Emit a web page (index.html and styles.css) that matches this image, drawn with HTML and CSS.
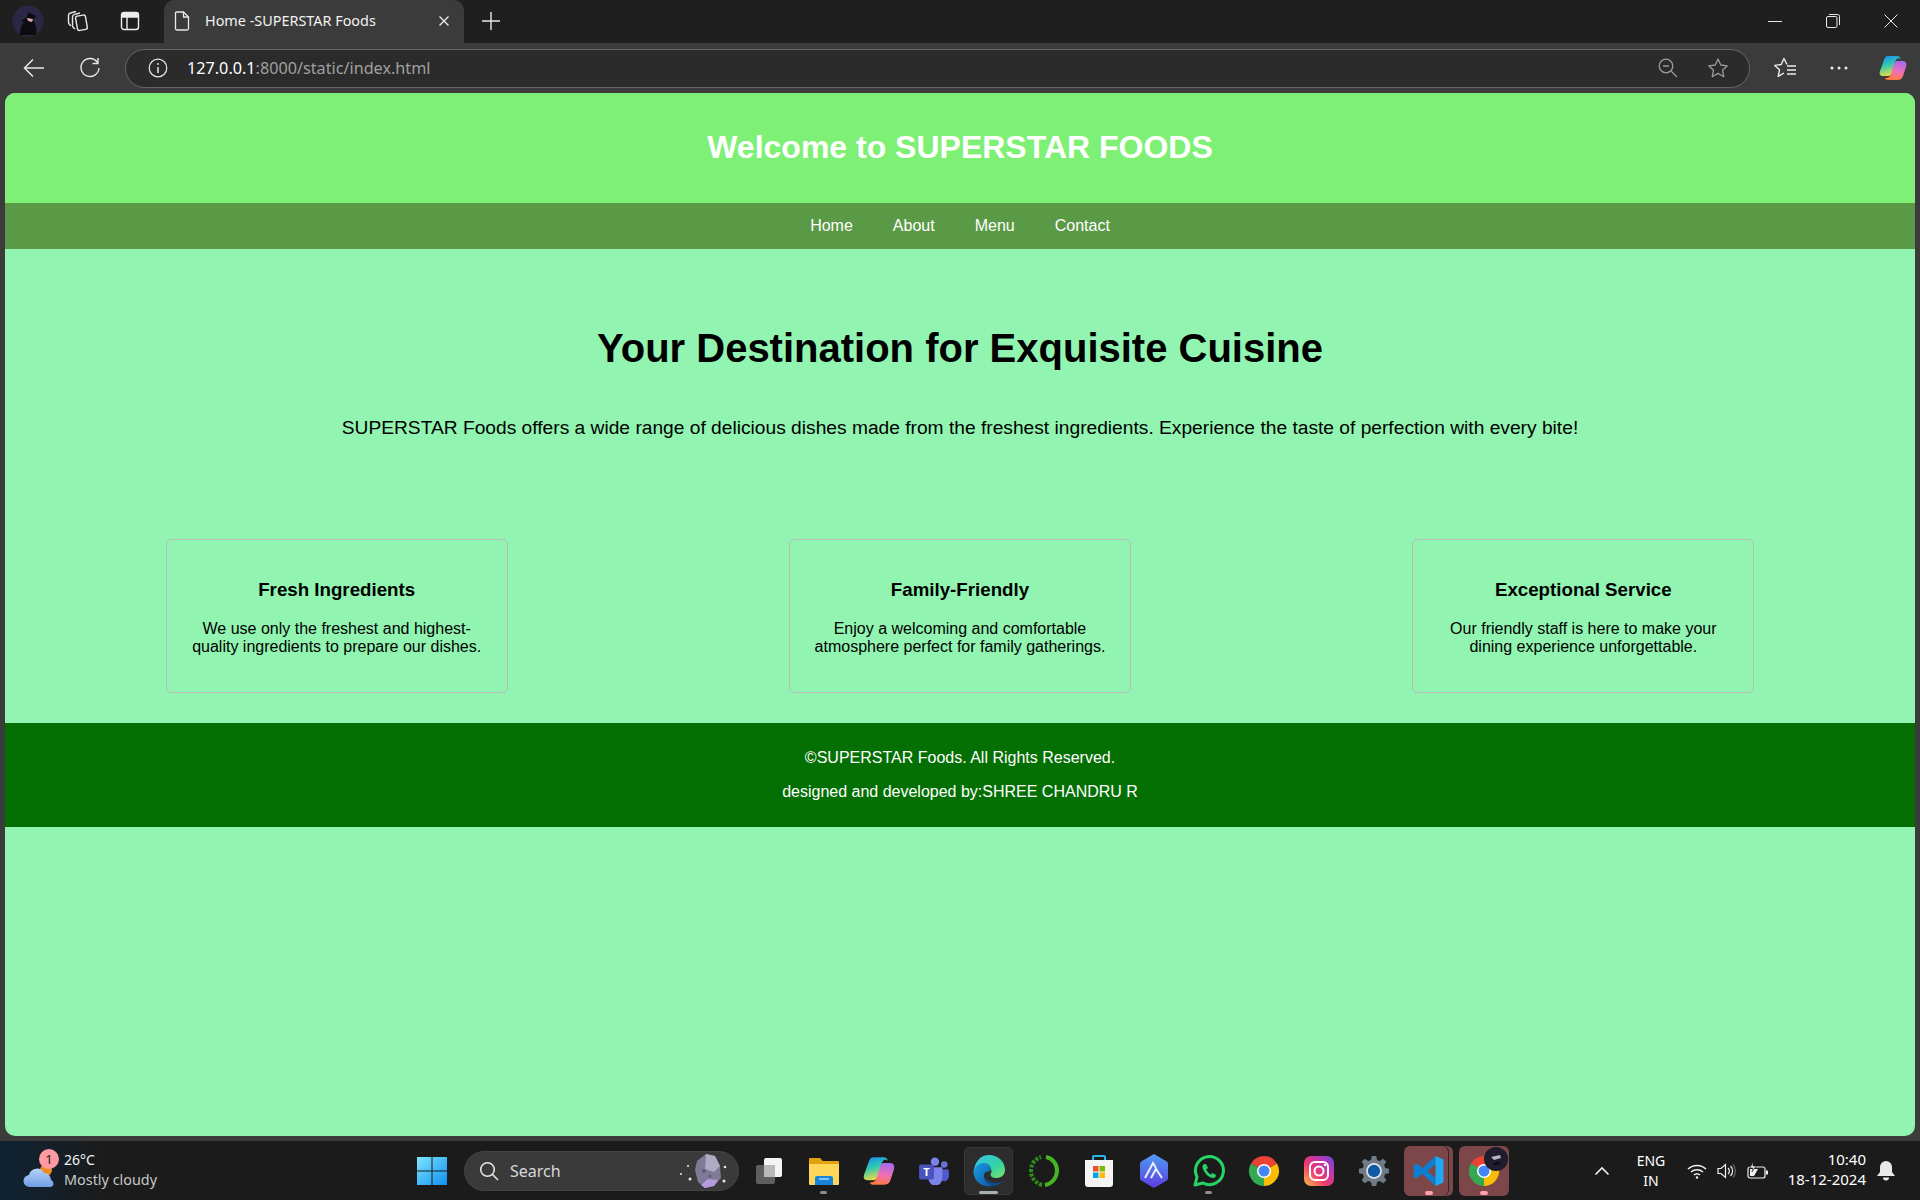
FILE: index.html
```html
<!DOCTYPE html>
<html lang="en">
<head>
    <meta charset="UTF-8">
    <meta name="viewport" content="width=device-width, initial-scale=1.0">
    <title>Home -SUPERSTAR Foods</title>
    <link rel="stylesheet" href="styles.css">
</head>
<body>
    <!-- browser title bar -->
    <div class="titlebar">
        <div class="tb-btn profile">
            <svg width="32" height="32" viewBox="0 0 32 32"><circle cx="16" cy="16" r="15.500" fill="#2c2745"/><path d="M8 30c0-7 2-10 4-13l-3-1 6-4 1-5 8 4-3 4c3 4 4 9 3 15z" fill="#0c0b12"/><path d="M15 13l6 1-1 3-4-1z" fill="#dba7b3"/></svg>
        </div>
        <div class="tb-btn collections">
            <svg width="24" height="24" viewBox="0 0 24 24" fill="none" stroke="#e8e8e8" stroke-width="1.400"><rect x="10.500" y="6.500" width="10" height="14.500" rx="2" transform="rotate(-10 15.500 14)"/><path d="M9 20l-1.500-1.300c-.7-.6-1-1.300-1-2.200V8c0-1.500.8-2.300 2-2.600L14 4"/><path d="M5 17l-1.500-1.500C2.800 14.800 2.500 14 2.500 13V6.500c0-1.400.7-2.200 2-2.500L10 2.500"/></svg>
        </div>
        <div class="tb-btn tabactions">
            <svg width="20" height="20" viewBox="0 0 20 20" fill="none" stroke="#eee" stroke-width="1.400"><rect x="1.500" y="1.500" width="17" height="17" rx="2.500"/><path d="M2 2.500h16V6H2z" fill="#eee"/><path d="M7 6v12"/></svg>
        </div>
        <div class="tab">
            <svg class="tab-icon" width="16" height="20" viewBox="0 0 16 20" fill="none" stroke="#e8e8e8" stroke-width="1.300"><path d="M2.500 1h7L14.500 6v11.500a1.500 1.500 0 0 1-1.500 1.500H3a1.500 1.500 0 0 1-1.500-1.500V2A1 1 0 0 1 2.500 1z"/><path d="M9.500 1v5h5"/></svg>
            <span class="tab-title">Home -SUPERSTAR Foods</span>
            <svg class="tab-close" width="12" height="12" viewBox="0 0 12 12" stroke="#e8e8e8" stroke-width="1.400"><path d="M1.500 1.500l9 9M10.500 1.500l-9 9"/></svg>
        </div>
        <div class="newtab">
            <svg width="18" height="18" viewBox="0 0 18 18" stroke="#e8e8e8" stroke-width="1.400"><path d="M9 0v18M0 9h18"/></svg>
        </div>
        <div class="win-controls">
            <div class="win-btn"><svg width="14" height="14" viewBox="0 0 14 14" stroke="#e8e8e8"><path d="M0 7.500h14"/></svg></div>
            <div class="win-btn"><svg width="14" height="14" viewBox="0 0 14 14" fill="none" stroke="#e8e8e8"><rect x=".5" y="2.500" width="10.500" height="11" rx="1.500"/><path d="M3 .5h8.500a2 2 0 0 1 2 2V11"/></svg></div>
            <div class="win-btn"><svg width="14" height="14" viewBox="0 0 14 14" stroke="#e8e8e8"><path d="M.5.5l13 13M13.500.5l-13 13"/></svg></div>
        </div>
    </div>

    <!-- address bar row -->
    <div class="toolbar">
        <div class="nav-btn">
            <svg width="22" height="20" viewBox="0 0 22 20" fill="none" stroke="#e8e8e8" stroke-width="1.500"><path d="M21 10H2M10 1.500L1.500 10l8.500 8.500"/></svg>
        </div>
        <div class="nav-btn">
            <svg width="22" height="22" viewBox="0 0 22 22" fill="none" stroke="#e8e8e8" stroke-width="1.400"><path d="M18.500 5.500A9 9 0 1 0 20 11"/><path d="M19 1v5.500h-5.500"/></svg>
        </div>
        <div class="address">
            <svg class="addr-info" width="20" height="20" viewBox="0 0 20 20" fill="none" stroke="#e8e8e8" stroke-width="1.200"><circle cx="10" cy="10" r="8.800"/><path d="M10 9v6" stroke-width="1.500"/><circle cx="10" cy="6" r=".9" fill="#e8e8e8" stroke="none"/></svg>
            <span class="url"><span class="url-host">127.0.0.1</span>:8000/static/index.html</span>
            <div class="addr-btn addr-first">
                <svg width="20" height="20" viewBox="0 0 20 20" fill="none" stroke="#9a9a9a" stroke-width="1.300"><circle cx="8" cy="8" r="6.800"/><path d="M5 8h6M13 13l6 6"/></svg>
            </div>
            <div class="addr-btn">
                <svg width="22" height="22" viewBox="0 0 22 22" fill="none" stroke="#9a9a9a" stroke-width="1.300" stroke-linejoin="round"><path d="M11 2l2.800 6 6.500.8-4.800 4.400 1.300 6.500-5.800-3.300-5.800 3.300 1.300-6.500L1.700 8.800 8.200 8z"/></svg>
            </div>
        </div>
        <div class="tool-btn">
            <svg width="24" height="22" viewBox="0 0 24 22" fill="none" stroke="#ececec" stroke-width="1.400" stroke-linejoin="round"><path d="M14 7.500L11 1.500 8.200 7.500l-6.500.9 4.800 4.400-1.300 6.500 5.800-3.300"/><path d="M14 9h9M14 13h9M14 17h9"/></svg>
        </div>
        <div class="tool-btn">
            <svg width="18" height="4" viewBox="0 0 18 4" fill="#ececec"><circle cx="2" cy="2" r="1.500"/><circle cx="9" cy="2" r="1.500"/><circle cx="16" cy="2" r="1.500"/></svg>
        </div>
        <div class="tool-btn">
            <svg width="28" height="28" viewBox="0 0 28 28">
                <defs>
                    <linearGradient id="cpA" x1=".2" y1="0" x2=".5" y2="1"><stop offset="0" stop-color="#1b8fee"/><stop offset=".45" stop-color="#2fc9b0"/><stop offset="1" stop-color="#f7dc3a"/></linearGradient>
                    <linearGradient id="cpB" x1=".6" y1="0" x2=".4" y2="1"><stop offset="0" stop-color="#a868ee"/><stop offset=".55" stop-color="#f070b4"/><stop offset="1" stop-color="#ff7a3a"/></linearGradient>
                </defs>
                <path d="M9 2h9c2 0 3 1 4 3-3-2-5 0-6 3l-3 11c-.6 2-2 3-4 3H4c-3 0-4-2-3-5L5 6c.8-2.500 2-4 4-4z" fill="url(#cpA)"/>
                <path d="M17 7h7c3 0 4 3 3 6l-3 9c-1 3-3 4-6 4H9c-2 0-3-1-3-2 3 .5 5-1 6-4l3-10c.3-1.300 1-2.300 2-3z" fill="url(#cpB)"/>
            </svg>
        </div>
    </div>

    <!-- the page itself -->
    <div class="viewport">
        <div class="page">
            <header class="site-header">
                <h1>Welcome to SUPERSTAR FOODS</h1>
            </header>
            <nav class="site-nav">
                <a href="#">Home</a>
                <a href="#">About</a>
                <a href="#">Menu</a>
                <a href="#">Contact</a>
            </nav>
            <section class="hero">
                <h2>Your Destination for Exquisite Cuisine</h2>
                <p>SUPERSTAR Foods offers a wide range of delicious dishes made from the freshest ingredients. Experience the taste of perfection with every bite!</p>
            </section>
            <section class="features">
                <div class="feature">
                    <h3>Fresh Ingredients</h3>
                    <p>We use only the freshest and highest-quality ingredients to prepare our dishes.</p>
                </div>
                <div class="feature">
                    <h3>Family-Friendly</h3>
                    <p>Enjoy a welcoming and comfortable atmosphere perfect for family gatherings.</p>
                </div>
                <div class="feature">
                    <h3>Exceptional Service</h3>
                    <p>Our friendly staff is here to make your dining experience unforgettable.</p>
                </div>
            </section>
            <footer class="site-footer">
                <p>©SUPERSTAR Foods. All Rights Reserved.</p>
                <p>designed and developed by:SHREE CHANDRU R</p>
            </footer>
        </div>
    </div>

    <!-- windows taskbar -->
    <div class="taskbar">
        <div class="weather">
            <svg class="weather-icon" width="34" height="26" viewBox="0 0 34 26"><defs><linearGradient id="cloud" x1="0" y1="0" x2="0" y2="1"><stop offset="0" stop-color="#b4d2f7"/><stop offset="1" stop-color="#6f9fe6"/></linearGradient></defs><circle cx="23" cy="8" r="6" fill="#f08a24"/><path d="M7 25a6 6 0 0 1-1-12 8 8 0 0 1 15-2 7 7 0 0 1 7 7c3 1 4 7-1 7z" fill="url(#cloud)"/></svg>
            <span class="weather-badge">1</span>
            <div class="weather-text">
                <span class="temp">26°C</span>
                <span class="cond">Mostly cloudy</span>
            </div>
        </div>
        <div class="start">
            <svg width="30" height="30" viewBox="0 0 30 30"><defs><linearGradient id="winG" x1="0" y1="0" x2="1" y2="1"><stop offset="0" stop-color="#7fe6ff"/><stop offset="1" stop-color="#0f8fef"/></linearGradient></defs><path d="M0 1h14.500v13.500H0zM15.500 1H30v13.500H15.500zM0 15.500h14.500V29H0zM15.500 15.500H30V29H15.500z" fill="url(#winG)"/></svg>
        </div>
        <div class="search">
            <svg width="20" height="20" viewBox="0 0 20 20" fill="none" stroke="#e4e4e4" stroke-width="1.600"><circle cx="8.500" cy="8.500" r="6.800"/><path d="M13.500 13.500l5.500 5.500"/></svg>
            <span class="search-label">Search</span>
            <svg class="search-art" width="50" height="36" viewBox="0 0 50 36"><path d="M19 8l9-7 9 2 5 10 1 12-7 8-9 2-7-6-3-12z" fill="#7f7b96"/><path d="M28 1l9 2 5 10-6 6-9-3z" fill="#aeacc2"/><path d="M23 32l7-6 10 1-4 6-9 2z" fill="#b39bdc"/><circle cx="26" cy="18" r="2" fill="#5f5b76"/><circle cx="32" cy="23" r="1.500" fill="#5f5b76"/><g fill="#e8e8f0"><circle cx="3" cy="21" r="1"/><circle cx="10" cy="13" r="1"/><circle cx="12" cy="26" r="1.500"/><circle cx="47" cy="14" r="1.300"/><circle cx="46" cy="28" r="1.500"/></g></svg>
        </div>

        <div class="apps">
            <div class="app">
                <svg width="30" height="30" viewBox="0 0 30 30"><rect x="2" y="9" width="19" height="19" rx="2" fill="#5e5e5e"/><rect x="10" y="2" width="18" height="19" rx="2" fill="#f4f4f4"/><rect x="10" y="9" width="11" height="12" fill="#b9b9b9"/></svg>
            </div>
            <div class="app app-running">
                <svg width="32" height="30" viewBox="0 0 32 30"><path d="M1 3a1 1 0 0 1 1-1h10l3 3h15a1 1 0 0 1 1 1v3H1z" fill="#e2a20c"/><path d="M1 8h30v20a1 1 0 0 1-1 1H2a1 1 0 0 1-1-1z" fill="#fdd65a"/><path d="M9 20h14a2 2 0 0 1 2 2v7H7v-7a2 2 0 0 1 2-2z" fill="#1a84d8"/><path d="M11 23h10" stroke="#a9dbff" stroke-width="1.500"/></svg>
            </div>
            <div class="app">
                <svg width="32" height="32" viewBox="0 0 28 28"><defs><linearGradient id="cpA2" x1=".2" y1="0" x2=".5" y2="1"><stop offset="0" stop-color="#1b8fee"/><stop offset=".45" stop-color="#2fc9b0"/><stop offset="1" stop-color="#f7dc3a"/></linearGradient><linearGradient id="cpB2" x1=".6" y1="0" x2=".4" y2="1"><stop offset="0" stop-color="#a868ee"/><stop offset=".55" stop-color="#f070b4"/><stop offset="1" stop-color="#ff7a3a"/></linearGradient></defs><path d="M9 2h9c2 0 3 1 4 3-3-2-5 0-6 3l-3 11c-.6 2-2 3-4 3H4c-3 0-4-2-3-5L5 6c.8-2.500 2-4 4-4z" fill="url(#cpA2)"/><path d="M17 7h7c3 0 4 3 3 6l-3 9c-1 3-3 4-6 4H9c-2 0-3-1-3-2 3 .5 5-1 6-4l3-10c.3-1.300 1-2.300 2-3z" fill="url(#cpB2)"/></svg>
            </div>
            <div class="app">
                <svg width="30" height="28" viewBox="0 0 32 30"><circle cx="27" cy="8" r="3.500" fill="#6a71d8"/><path d="M23 13h7a2 2 0 0 1 2 2v6a5 5 0 0 1-8 4z" fill="#5059c9"/><circle cx="17" cy="5" r="4.500" fill="#7b83eb"/><path d="M10 11h15v12a7.500 7.500 0 0 1-15 0z" fill="#7b83eb"/><rect x="0" y="8" width="16" height="16" rx="2" fill="#4b53bc"/><text x="8" y="20.500" class="teams-t">T</text></svg>
            </div>
            <div class="app app-active">
                <svg width="34" height="34" viewBox="0 0 34 34"><defs><linearGradient id="edgeA" x1="0" y1="0" x2="1" y2="1"><stop offset="0" stop-color="#35c1f1"/><stop offset=".6" stop-color="#34d3a0"/><stop offset="1" stop-color="#7fe36a"/></linearGradient><linearGradient id="edgeB" x1="0" y1="0" x2="1" y2="1"><stop offset="0" stop-color="#1b9de2"/><stop offset="1" stop-color="#0c59a4"/></linearGradient></defs><path d="M17 1c9 0 16 6.500 16 15 0 5-4 8-8.500 8-3 0-6-1-6-3.500 0-1 1-1.500 1-3.500 0-3-3-6-7-6-5 0-9 4-11 8C2.500 8 8 1 17 1z" fill="url(#edgeA)"/><path d="M1.500 19c.5-6 5-10 10.500-10 4 0 7 3 7 6 0 1-1 2.500-3 2.500-3 0-5 3-3.500 7 1 3 3.500 6 7 7.500-1 .5-2 .5-3 .5C8 32 2 26 1.500 19z" fill="url(#edgeB)"/><path d="M19 32c-2-1-5-4-5.500-7.500 3 3 7 4.500 11 4.500 3 0 6-1.500 7.500-3.500-2 4-7 6.500-13 6.500z" fill="#0f4d8c"/></svg>
            </div>
            <div class="app">
                <svg width="30" height="34" viewBox="0 0 30 34" fill="none"><path d="M17 3c6 1 11 6.500 11 13.500S23 30 16 31" stroke="#46b51f" stroke-width="4"/><path d="M13 31C6 29 2 23.500 2 16.500S6 5 12 3" stroke="#2f8f1a" stroke-width="4" stroke-dasharray="3 1.500"/></svg>
            </div>
            <div class="app">
                <svg width="30" height="34" viewBox="0 0 30 34"><path d="M9 7V3a1 1 0 0 1 1-1h10a1 1 0 0 1 1 1v4" fill="none" stroke="#28b5ee" stroke-width="2"/><path d="M1 6h28v24a3 3 0 0 1-3 3H4a3 3 0 0 1-3-3z" fill="#f4f4f4"/><rect x="9" y="12" width="5.500" height="5.500" fill="#f25022"/><rect x="15.500" y="12" width="5.500" height="5.500" fill="#7fba00"/><rect x="9" y="18.500" width="5.500" height="5.500" fill="#00a4ef"/><rect x="15.500" y="18.500" width="5.500" height="5.500" fill="#ffb900"/></svg>
            </div>
            <div class="app">
                <svg width="28" height="34" viewBox="0 0 28 34"><defs><linearGradient id="hexG" x1="0" y1="0" x2="0" y2="1"><stop offset="0" stop-color="#4f9bf2"/><stop offset="1" stop-color="#5b3ee0"/></linearGradient></defs><path d="M14 0l12 7c1 .5 2 1.500 2 3v14c0 1.500-1 2.500-2 3l-12 7-12-7c-1-.5-2-1.500-2-3V10c0-1.500 1-2.500 2-3z" fill="url(#hexG)"/><path d="M5 24L13 9l3 5M11 24l5-9 6 9" fill="none" stroke="#e8f0ff" stroke-width="2"/></svg>
            </div>
            <div class="app app-running">
                <svg width="32" height="32" viewBox="0 0 32 32" fill="none"><path d="M2 30l2-8A14 14 0 1 1 10 28z" stroke="#25d366" stroke-width="3" stroke-linejoin="round"/><path d="M11 9c-2 1-2 4 0 7 2 4 6 7 9 7 2 0 3-1 3-3l-3.500-2-1.500 1.500c-2-.8-4-3-4.800-5L15 13l-2-4z" fill="#25d366"/></svg>
            </div>
            <div class="app">
                <svg width="32" height="32" viewBox="0 0 32 32"><path d="M16 16L3 8.500A15 15 0 0 1 29 8.500z" fill="#ea4335"/><path d="M16 16L29 8.500A15 15 0 0 1 16 31z" fill="#fbbc05"/><path d="M16 16L16 31A15 15 0 0 1 3 8.500z" fill="#34a853"/><circle cx="16" cy="16" r="7" fill="#fff"/><circle cx="16" cy="16" r="5.500" fill="#4285f4"/></svg>
            </div>
            <div class="app">
                <svg width="30" height="30" viewBox="0 0 30 30" fill="none"><defs><linearGradient id="igG" x1="0" y1="1" x2="1" y2="0"><stop offset="0" stop-color="#fdc04a"/><stop offset=".4" stop-color="#ee3a6a"/><stop offset=".75" stop-color="#b636b8"/><stop offset="1" stop-color="#5b51d8"/></linearGradient></defs><rect width="30" height="30" rx="7" fill="url(#igG)"/><rect x="6" y="6" width="18" height="18" rx="5" stroke="#fff" stroke-width="2"/><circle cx="15" cy="15" r="4.500" stroke="#fff" stroke-width="2"/><circle cx="21" cy="9" r="1.300" fill="#fff"/></svg>
            </div>
            <div class="app">
                <svg width="30" height="30" viewBox="-2 0 34 34"><path d="M12.500 0h5l1 4.500 3 1.300L25.500 3 29 6.500l-2.500 4 1.200 3L32 14.500v5l-4.300 1-1.200 3 2.500 4-3.500 3.500-4-2.700-3 1.200-1 4.500h-5l-1-4.500-3-1.200-4 2.700L1 27.500l2.500-4-1.200-3L-2 19.500v-5l4.300-1 1.200-3L1 6.500 4.500 3l4 2.800 3-1.300z" fill="#6e7a85"/><circle cx="15" cy="17" r="9" fill="#dfe3e6"/><circle cx="15" cy="17" r="7" fill="#0f5aa6"/></svg>
            </div>
            <div class="app app-flash app-stacked">
                <svg width="31" height="32" viewBox="0 0 30 32"><path d="M22 1L9 13 3 8.500 0 10.300v11.400l3 1.800 6-4.500L22 31zM22 9l-8 7 8 7z" fill="#0e7fd0" fill-rule="evenodd"/><path d="M22 1l8 3.500v23L22 31z" fill="#20a8f5"/></svg>
            </div>
            <div class="app app-flash">
                <svg width="32" height="32" viewBox="0 0 32 32"><path d="M16 16L3 8.500A15 15 0 0 1 29 8.500z" fill="#ea4335"/><path d="M16 16L29 8.500A15 15 0 0 1 16 31z" fill="#fbbc05"/><path d="M16 16L16 31A15 15 0 0 1 3 8.500z" fill="#34a853"/><circle cx="16" cy="16" r="7" fill="#fff"/><circle cx="16" cy="16" r="5.500" fill="#4285f4"/></svg>
                <svg class="app-avatar" width="24" height="24" viewBox="0 0 24 24"><circle cx="12" cy="12" r="12" fill="#1f1c2e"/><path d="M7 10l9-2 1 3-7 2z" fill="#b9b4c2"/><path d="M9 16l6-1 1 2-6 1z" fill="#0c0b12"/></svg>
            </div>
        </div>

        <div class="tray">
            <div class="tray-chevron">
                <svg width="16" height="10" viewBox="0 0 16 10" fill="none" stroke="#f0f0f0" stroke-width="1.600"><path d="M1.500 8.500L8 2l6.500 6.500"/></svg>
            </div>
            <div class="tray-lang"><span>ENG</span><span>IN</span></div>
            <div class="tray-wifi">
                <svg width="20" height="16" viewBox="0 0 20 16" fill="none" stroke="#f0f0f0" stroke-width="1.500"><path d="M1 6a13 13 0 0 1 18 0M4 9a9 9 0 0 1 12 0M7 12a4.500 4.500 0 0 1 6 0"/><circle cx="10" cy="14.500" r="1.200" fill="#f0f0f0" stroke="none"/></svg>
            </div>
            <div class="tray-vol">
                <svg width="20" height="16" viewBox="0 0 20 16" fill="none" stroke="#f0f0f0" stroke-width="1.200"><path d="M1 5.500h3L8.500 1.500v13L4 10.500H1z"/><path d="M11 5a4 4 0 0 1 0 6M13.500 3a7 7 0 0 1 0 10"/><path d="M16 1.500a10 10 0 0 1 0 13" stroke="#666"/></svg>
            </div>
            <div class="tray-bat">
                <svg width="22" height="18" viewBox="0 0 22 18" fill="none" stroke="#f0f0f0" stroke-width="1.200"><rect x="1" y="5" width="17" height="11" rx="2"/><path d="M20 8.500v4" stroke-width="2"/><path d="M3 14V7h5l3 0-4 7z" fill="#f0f0f0" stroke="none"/><path d="M6 0L3 6h3l-1 4 4-6H6z" fill="#f0f0f0" stroke="#1b1b1b" stroke-width=".6"/></svg>
            </div>
            <div class="tray-clock"><span>10:40</span><span>18-12-2024</span></div>
            <div class="tray-bell">
                <svg width="18" height="20" viewBox="0 0 18 20" fill="#e8e8e8"><path d="M9 0a6 6 0 0 1 6 6v5l3 4H0l3-4V6a6 6 0 0 1 6-6z"/><path d="M6 16.500h6a3 3 0 0 1-6 0z"/></svg>
            </div>
        </div>
    </div>
</body>
</html>
```

FILE: styles.css
```css
html, body {
    margin: 0;
    padding: 0;
}
body {
    width: 1920px;
    height: 1200px;
    overflow: hidden;
    display: flex;
    flex-direction: column;
    background-color: #3b3b3b;
    font-family: "Noto Sans", "Open Sans", sans-serif;
    color: #fff;
}

/* title bar */
.titlebar {
    height: 43px;
    flex: none;
    box-sizing: border-box;
    padding-bottom: 2px;
    display: flex;
    align-items: center;
    background-color: #1f1f1f;
}
.tb-btn {
    display: flex;
    justify-content: center;
    align-items: center;
}
.profile {
    width: 56px;
}
.collections {
    width: 44px;
}
.tabactions {
    width: 60px;
}
.tab {
    width: 300px;
    height: 43px;
    margin: 0 0 -2px 4px;
    padding-bottom: 2px;
    box-sizing: border-box;
    display: flex;
    align-items: center;
    background-color: #3b3b3b;
    border-radius: 10px 10px 0 0;
}
.tab-icon {
    margin-left: 10px;
}
.tab-title {
    margin-left: 15px;
    font-size: 14.4px;
    color: #f2f2f2;
    white-space: nowrap;
}
.tab-close {
    margin-left: auto;
    margin-right: 14px;
}
.newtab {
    width: 44px;
    margin-left: 5px;
    display: flex;
    justify-content: center;
}
.win-controls {
    margin-left: auto;
    display: flex;
}
.win-btn {
    width: 58px;
    display: flex;
    justify-content: center;
}

/* toolbar */
.toolbar {
    height: 50px;
    flex: none;
    display: flex;
    align-items: center;
    padding-left: 6px;
    background-color: #3b3b3b;
    box-sizing: border-box;
}
.nav-btn {
    width: 56px;
    display: flex;
    justify-content: center;
}
.address {
    flex: 1;
    height: 39px;
    margin: 0 8px 0 7px;
    padding: 0 6px 0 22px;
    box-sizing: border-box;
    display: flex;
    align-items: center;
    background-color: #2b2b2b;
    border: 1px solid #666;
    border-radius: 20px;
}
.addr-info {
    flex: none;
}
.url {
    margin-left: 19px;
    font-size: 16.2px;
    color: #a0a0a0;
    white-space: nowrap;
}
.url-host {
    color: #fff;
}
.addr-btn {
    width: 50px;
    display: flex;
    justify-content: center;
}
.addr-first {
    margin-left: auto;
}
.tool-btn {
    width: 54px;
    display: flex;
    justify-content: center;
}

/* page */
.viewport {
    flex: 1;
    min-height: 0;
    padding: 0 5px 5px;
}
.page {
    height: 100%;
    overflow: hidden;
    background-color: #91f4b1;
    border-radius: 10px;
    color: #000;
    font-family: "Liberation Sans", Arial, sans-serif;
}
.site-header {
    height: 110px;
    display: flex;
    justify-content: center;
    align-items: center;
    background-color: #7ff076;
    color: #fff;
}
.site-header h1 {
    margin: 0 0 2px;
    font-size: 32px;
}
.site-nav {
    height: 46px;
    display: flex;
    justify-content: center;
    align-items: center;
    gap: 40px;
    background-color: #5a9a46;
}
.site-nav a {
    color: #fff;
    font-size: 16px;
    text-decoration: none;
}
.hero {
    padding: 77px 20px 0;
    text-align: center;
}
.hero h2 {
    margin: 0 0 46px;
    font-size: 40px;
}
.hero p {
    margin: 0;
    font-size: 19.2px;
}
.features {
    margin-top: 100px;
    padding: 0 20px;
    display: flex;
    justify-content: space-around;
}
.feature {
    width: 300px;
    padding: 20px;
    border: 1px solid #bbb;
    border-radius: 5px;
    text-align: center;
}
.feature h3 {
    margin: 18.72px 0 19.72px;
    font-size: 18.72px;
}
.feature p {
    margin: 0 0 16px;
    font-size: 16px;
}
.site-footer {
    margin-top: 30px;
    padding: 10px;
    background-color: #047004;
    color: #fff;
    text-align: center;
    font-size: 16px;
}
.site-footer p {
    margin: 16px 0;
}

/* taskbar */
.taskbar {
    height: 59px;
    flex: none;
    position: relative;
    display: flex;
    align-items: center;
    background: linear-gradient(90deg, #0f2333 0, #1b1b1b 110px);
    font-size: 14px;
}
.weather {
    width: 412px;
    flex: none;
    display: flex;
    align-items: center;
    position: relative;
    box-sizing: border-box;
    padding-left: 23px;
}
.weather-icon {
    margin-top: 8px;
}
.weather-badge {
    position: absolute;
    left: 39px;
    top: -3px;
    width: 20px;
    height: 20px;
    border-radius: 50%;
    background-color: #ff9aa2;
    color: #1b1b1b;
    font-size: 13px;
    line-height: 20px;
    text-align: center;
}
.weather-text {
    margin: -2px 0 0 7px;
    display: flex;
    flex-direction: column;
    line-height: 20px;
    font-size: 14.4px;
}
.temp {
    color: #f4f4f4;
    font-size: 14px;
}
.cond {
    color: #c8c8c8;
}
.start {
    width: 40px;
    display: flex;
    justify-content: center;
}
.search {
    width: 275px;
    height: 40px;
    margin-left: 12px;
    padding: 0 10px 0 14px;
    box-sizing: border-box;
    display: flex;
    align-items: center;
    background-color: #3a3a3a;
    border: 1px solid #444;
    border-radius: 20px;
}
.search-label {
    margin-left: 11px;
    font-size: 16px;
    color: #d8d8d8;
}
.search-art {
    margin-left: auto;
}
.apps {
    margin-left: 2px;
    display: flex;
}
.app {
    width: 55px;
    height: 48px;
    position: relative;
    display: flex;
    justify-content: center;
    align-items: center;
}
.app-running::after,
.app-active::after,
.app-flash::after {
    content: "";
    position: absolute;
    left: 24px;
    bottom: 1px;
    width: 7px;
    height: 3px;
    border-radius: 2px;
    background-color: #8c8c8c;
}
.app-active::before {
    content: "";
    position: absolute;
    left: 3px;
    top: 0;
    width: 49px;
    height: 48px;
    box-sizing: border-box;
    background-color: #2d2d2d;
    border: 1px solid #383838;
    border-radius: 5px;
}
.app-active svg {
    position: relative;
}
.app-active::after {
    left: 18px;
    width: 19px;
    background-color: #a8b0b4;
}
.app-flash::before {
    content: "";
    position: absolute;
    left: 3px;
    top: -1px;
    width: 50px;
    height: 50px;
    background-color: #7d4648;
    border-radius: 6px;
}
.app-stacked::before {
    width: 44px;
    box-shadow: 1px 0 0 #2a2a2a, 5px 0 0 #7d4648;
}
.app-flash svg {
    position: relative;
}
.app-flash::after {
    width: 8px;
    height: 4px;
    bottom: 0;
    background-color: #ffa0ac;
}
.app-flash .app-avatar {
    position: absolute;
    right: 3px;
    top: 0;
}
.teams-t {
    fill: #fff;
    font-size: 12px;
    font-weight: bold;
    text-anchor: middle;
}
.tray {
    margin-left: auto;
    margin-right: 14px;
    display: flex;
    align-items: center;
}
.tray > div {
    display: flex;
    justify-content: center;
    align-items: center;
}
.tray-chevron {
    width: 30px;
}
.tray .tray-lang {
    width: 68px;
    flex-direction: column;
    line-height: 20px;
}
.tray-wifi {
    width: 24px;
}
.tray-vol {
    width: 36px;
}
.tray-bat {
    width: 26px;
}
.tray .tray-clock {
    width: 95px;
    margin-top: -4px;
    flex-direction: column;
    align-items: flex-end;
    line-height: 20px;
    font-size: 15px;
}
.tray-bell {
    width: 40px;
}
```
